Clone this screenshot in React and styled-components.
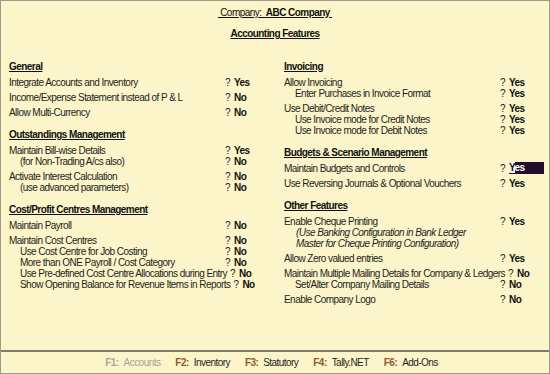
import React from 'react';
import styled, { createGlobalStyle } from 'styled-components';

const Global = createGlobalStyle`
  html, body { margin: 0; padding: 0; background: #fbf5c9; }
  body { font-family: "Liberation Sans", Arial, sans-serif; }
`;

const Screen = styled.div`
  width: 550px;
  height: 374px;
  box-sizing: border-box;
  border: 1px solid #9d9b8c;
  background: #fbf5c9;
  display: flex;
  flex-direction: column;
  font-size: 10px;
  letter-spacing: -0.55px;
  color: #1e1e1e;
  overflow: hidden;
`;

const Main = styled.main`
  flex: 1;
  display: flex;
  flex-direction: column;
`;

const Header = styled.header`
  display: flex;
  flex-direction: column;
  align-items: center;
  padding-top: 5px;
`;

const CompanyLine = styled.div`
  line-height: 13px;
  text-decoration: underline;
  white-space: pre;
  color: #111;
`;

const Strong = styled.b`
  font-weight: bold;
`;

const Title = styled.div`
  margin-top: 8px;
  line-height: 13px;
  font-weight: bold;
  text-decoration: underline;
  color: #111;
`;

const Columns = styled.div`
  margin-top: 21px;
  padding-left: 8px;
  display: grid;
  grid-template-columns: 275px 1fr;
`;

const Column = styled.div`
  display: flex;
  flex-direction: column;
`;

const Section = styled.section`
  display: flex;
  flex-direction: column;
  margin-top: ${p => (p.$first ? 0 : 11)}px;
`;

const Heading = styled.div`
  line-height: 12px;
  font-weight: bold;
  text-decoration: underline;
  color: #111;
`;

const Row = styled.div`
  display: flex;
  line-height: 11px;
  margin-top: ${p => (p.$sub ? 0 : 4)}px;
  white-space: nowrap;
`;

const Label = styled.span`
  box-sizing: border-box;
  flex: 0 0 auto;
  min-width: 216px;
  padding-left: ${p => p.$indent}px;
  padding-right: 3px;
  font-style: ${p => (p.$italic ? 'italic' : 'normal')};
`;

const Q = styled.span`
  color: #1e1e1e;
`;

const Value = styled.span`
  margin-left: 4px;
  font-weight: bold;
  color: #111;
  ${p =>
    p.$active &&
    `
    background: #1f0c2e;
    color: #fff;
    width: 35px;
    height: 12px;
    line-height: 12px;
    margin-top: -1px;
    display: inline-block;
  `}
`;

const Cursor = styled.span`
  background: #f6f2e2;
  color: #1f0c2e;
`;

const Footer = styled.footer`
  flex: 0 0 21px;
  border-top: 2px solid #7c7b70;
  display: flex;
  align-items: center;
  justify-content: center;
  gap: 15px;
  padding-right: 7px;
  line-height: 12px;
`;

const FItem = styled.span`
  color: ${p => (p.$disabled ? '#a9a596' : '#1e1e1e')};
  white-space: nowrap;
`;

const FKey = styled.b`
  font-weight: bold;
  color: ${p => (p.$disabled ? '#a9a596' : '#8e5a2c')};
  margin-right: 5px;
`;

const left = [
  {
    title: 'General',
    rows: [
      { l: 'Integrate Accounts and Inventory', v: 'Yes' },
      { l: 'Income/Expense Statement instead of P & L', v: 'No' },
      { l: 'Allow Multi-Currency', v: 'No' },
    ],
  },
  {
    title: 'Outstandings Management',
    rows: [
      { l: 'Maintain Bill-wise Details', v: 'Yes' },
      { l: '(for Non-Trading A/cs also)', v: 'No', sub: true },
      { l: 'Activate Interest Calculation', v: 'No' },
      { l: '(use advanced parameters)', v: 'No', sub: true },
    ],
  },
  {
    title: 'Cost/Profit Centres Management',
    rows: [
      { l: 'Maintain Payroll', v: 'No' },
      { l: 'Maintain Cost Centres', v: 'No' },
      { l: 'Use Cost Centre for Job Costing', v: 'No', sub: true },
      { l: 'More than ONE Payroll / Cost Category', v: 'No', sub: true },
      { l: 'Use Pre-defined Cost Centre Allocations during Entry', v: 'No', sub: true },
      { l: 'Show Opening Balance for Revenue Items in Reports', v: 'No', sub: true },
    ],
  },
];

const right = [
  {
    title: 'Invoicing',
    rows: [
      { l: 'Allow Invoicing', v: 'Yes' },
      { l: 'Enter Purchases in Invoice Format', v: 'Yes', sub: true },
      { l: 'Use Debit/Credit Notes', v: 'Yes' },
      { l: 'Use Invoice mode for Credit Notes', v: 'Yes', sub: true },
      { l: 'Use Invoice mode for Debit Notes', v: 'Yes', sub: true },
    ],
  },
  {
    title: 'Budgets & Scenario Management',
    rows: [
      { l: 'Maintain Budgets and Controls', v: 'Yes', active: true },
      { l: 'Use Reversing Journals & Optional Vouchers', v: 'Yes' },
    ],
  },
  {
    title: 'Other Features',
    rows: [
      { l: 'Enable Cheque Printing', v: 'Yes' },
      { l: '(Use Banking Configuration in Bank Ledger', note: true },
      { l: 'Master for Cheque Printing Configuration)', note: true },
      { l: 'Allow Zero valued entries', v: 'Yes' },
      { l: 'Maintain Multiple Mailing Details for Company & Ledgers', v: 'No' },
      { l: 'Set/Alter Company Mailing Details', v: 'No', sub: true },
      { l: 'Enable Company Logo', v: 'No' },
    ],
  },
];

function FeatureRow({ r }) {
  const sub = r.sub || r.note;
  return (
    <Row $sub={sub}>
      <Label $indent={r.note ? 12 : r.sub ? 11 : 0} $italic={r.note}>
        {r.l}
      </Label>
      {!r.note && (
        <>
          <Q>?</Q>
          {r.active ? (
            <Value $active>
              <Cursor>Y</Cursor>es
            </Value>
          ) : (
            <Value>{r.v}</Value>
          )}
        </>
      )}
    </Row>
  );
}

function FeatureColumn({ sections }) {
  return (
    <Column>
      {sections.map((s, i) => (
        <Section key={s.title} $first={i === 0}>
          <Heading>{s.title}</Heading>
          {s.rows.map(r => (
            <FeatureRow key={r.l} r={r} />
          ))}
        </Section>
      ))}
    </Column>
  );
}

const fkeys = [
  { k: 'F1:', t: 'Accounts', disabled: true },
  { k: 'F2:', t: 'Inventory' },
  { k: 'F3:', t: 'Statutory' },
  { k: 'F4:', t: 'Tally.NET' },
  { k: 'F6:', t: 'Add-Ons' },
];

export default function App() {
  return (
    <>
      <Global />
      <Screen>
        <Main>
          <Header>
            <CompanyLine>
              {' Company:  '}
              <Strong>ABC Company </Strong>
            </CompanyLine>
            <Title>Accounting Features</Title>
          </Header>
          <Columns>
            <FeatureColumn sections={left} />
            <FeatureColumn sections={right} />
          </Columns>
        </Main>
        <Footer>
          {fkeys.map(f => (
            <FItem key={f.k} $disabled={f.disabled}>
              <FKey $disabled={f.disabled}>{f.k}</FKey>
              {f.t}
            </FItem>
          ))}
        </Footer>
      </Screen>
    </>
  );
}
